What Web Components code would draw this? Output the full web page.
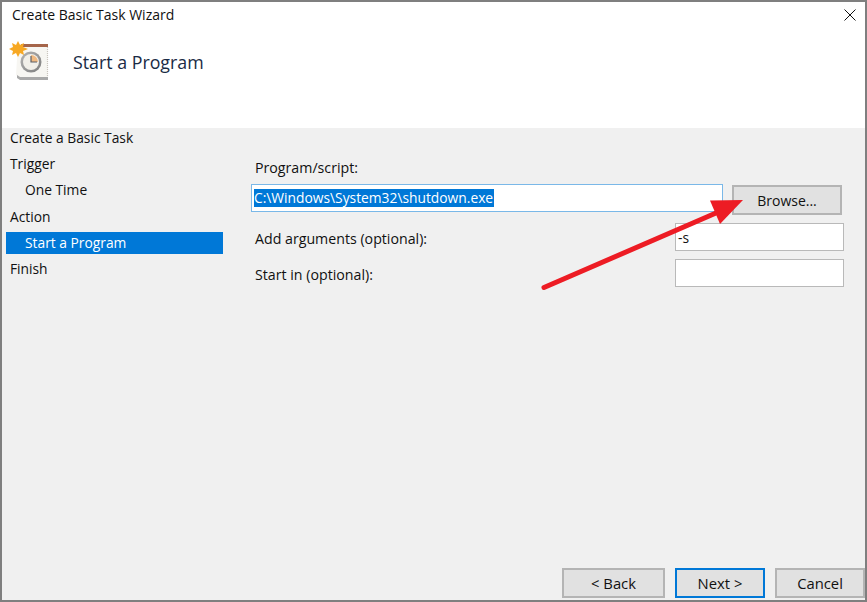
<!DOCTYPE html>
<html>
<head>
<meta charset="utf-8">
<title>Create Basic Task Wizard</title>
<style>
  html, body { margin: 0; height: 100%; }
  body { font: 14px "Open Sans", "Noto Sans", sans-serif; color: #111; overflow: hidden; }
</style>
</head>
<body>
<wizard-window>
  <wizard-header slot="header" heading="Start a Program"></wizard-header>
  <step-list slot="steps">
    <step-item>Create a Basic Task</step-item>
    <step-item>Trigger</step-item>
    <step-item sub>One Time</step-item>
    <step-item>Action</step-item>
    <step-item sub selected>Start a Program</step-item>
    <step-item>Finish</step-item>
  </step-list>
  <program-form slot="content"></program-form>
  <win-button slot="footer" style="width:103px">&lt; Back</win-button>
  <win-button slot="footer" primary style="width:90px">Next &gt;</win-button>
  <win-button slot="footer" style="width:90px">Cancel</win-button>
</wizard-window>

<script>
class WizardWindow extends HTMLElement {
  constructor() {
    super();
    this.attachShadow({ mode: 'open' });
    this.shadowRoot.innerHTML = `
      <style>
        :host { display: flex; flex-direction: column; box-sizing: border-box; width: 867px; height: 602px; border: 2px solid #7f7f7f; background: #f0f0f0; position: relative; }
        .title { box-sizing: border-box; height: 26px; background: #fff; display: flex; align-items: center; justify-content: space-between; padding: 0 9px 2px 10px; font-size: 14px; color: #111; }
        .title svg { display: block; margin-top: 2px; }
        .body { flex: 1; display: flex; min-height: 0; }
        .side { width: 221px; box-sizing: border-box; padding: 0 0 0 4px; flex: none; }
        .main { flex: 1; display: flex; flex-direction: column; }
        .content { flex: 1; }
        .footer { display: flex; justify-content: flex-end; gap: 10px; padding: 0 0 2px 0; }
        .arrow { position: absolute; left: 0; top: 0; pointer-events: none; }
      </style>
      <div class="title">
        <span>Create Basic Task Wizard</span>
        <svg width="12" height="12" viewBox="0 0 12 12"><path d="M.5.5l11 11M11.5.5l-11 11" stroke="#111" stroke-width="1" fill="none"/></svg>
      </div>
      <slot name="header"></slot>
      <div class="body">
        <div class="side"><slot name="steps"></slot></div>
        <div class="main">
          <div class="content"><slot name="content"></slot></div>
          <div class="footer"><slot name="footer"></slot></div>
        </div>
      </div>
      <svg class="arrow" width="863" height="598" viewBox="2 2 863 598">
        <path d="M544 287.5L716 213" stroke="#ed1c24" stroke-width="5" stroke-linecap="round" fill="none"/>
        <path d="M743 200L710 200.5L720 224Z" fill="#ed1c24"/>
      </svg>`;
  }
}
customElements.define('wizard-window', WizardWindow);

class WizardHeader extends HTMLElement {
  constructor() {
    super();
    this.attachShadow({ mode: 'open' });
    this.shadowRoot.innerHTML = `
      <style>
        :host { display: flex; align-items: flex-start; height: 100px; background: #fff; }
        svg { margin: 13px 0 0 7px; flex: none; }
        h1 { margin: 21px 0 0 24px; font-weight: 400; font-size: 17.8px; line-height: 26px; color: #1a2b45; }
      </style>
      <svg width="40" height="40" viewBox="0 0 40 40">
        <defs>
          <linearGradient id="ring" x1="0" y1="0" x2="1" y2="1">
            <stop offset="0" stop-color="#b5b5b5"/>
            <stop offset="1" stop-color="#7d7d7d"/>
          </linearGradient>
        </defs>
        <path d="M9 3H39V37H11L7 34Z" fill="#f7f6f2"/>
        <path d="M8 34L11 36H39V39H11L8 37Z" fill="#a9a9a9"/>
        <path d="M12 3H39V6H12Z" fill="#a5654a"/>
        <path d="M38.5 6V36" stroke="#c9c4bd" stroke-width="1.2" stroke-dasharray="1 1"/>
        <circle cx="22" cy="21" r="10.5" fill="url(#ring)"/>
        <circle cx="22" cy="21" r="8" fill="#f1efe9"/>
        <path d="M22 21V14A7 7 0 0 1 29 21Z" fill="#f0b981"/>
        <path d="M22 15V21H28" stroke="#5d6066" stroke-width="1.2" fill="none"/>
        <path d="M9 0L11 4 15 2 14 6 19 8 14 10 15 14 11 12 9 16 7 12 3 14 4 10 0 8 4 6 3 2 7 4Z" fill="#f7a823"/>
      </svg>
      <h1>${this.getAttribute('heading')}</h1>`;
  }
}
customElements.define('wizard-header', WizardHeader);

class StepList extends HTMLElement {
  constructor() {
    super();
    this.attachShadow({ mode: 'open' });
    this.shadowRoot.innerHTML = `
      <style>:host { display: flex; flex-direction: column; gap: 4.3px; margin-top: -1.2px; }</style>
      <slot></slot>`;
  }
}
customElements.define('step-list', StepList);

class StepItem extends HTMLElement {
  constructor() {
    super();
    this.attachShadow({ mode: 'open' });
    this.shadowRoot.innerHTML = `
      <style>
        :host { display: block; height: 22px; line-height: 21px; padding-left: 4px; font-size: 13.8px; color: #111; }
        :host([sub]) { padding-left: 19px; }
        :host([selected]) { background: #0078d7; color: #fff; }
      </style>
      <slot></slot>`;
  }
}
customElements.define('step-item', StepItem);

class WinButton extends HTMLElement {
  constructor() {
    super();
    this.attachShadow({ mode: 'open' });
    this.shadowRoot.innerHTML = `
      <style>
        :host { display: flex; align-items: center; justify-content: center; box-sizing: border-box; height: 30px; border: 2px solid #b4b4b4; background: #e1e1e1; font-size: 14.8px; color: #111; }
        :host([primary]) { border-color: #0078d7; }
      </style>
      <slot></slot>`;
  }
}
customElements.define('win-button', WinButton);

class WinInput extends HTMLElement {
  constructor() {
    super();
    this.attachShadow({ mode: 'open' });
    this.shadowRoot.innerHTML = `
      <style>
        :host { display: flex; align-items: center; box-sizing: border-box; height: 28px; padding: 0 2px; border: 1px solid #b9b9b9; background: #fff; font-size: 13.8px; color: #111; }
        :host([focused]) { border-color: #7ab8e8; }
        ::slotted(mark) { background: #0078d7; color: #fff; line-height: 18px; padding-right: 1px; }
      </style>
      <slot></slot>`;
  }
}
customElements.define('win-input', WinInput);

class ProgramForm extends HTMLElement {
  constructor() {
    super();
    this.attachShadow({ mode: 'open' });
    this.shadowRoot.innerHTML = `
      <style>
        :host { display: flex; flex-direction: column; padding: 30px 21px 0 28px; font-size: 14.2px; color: #111; }
        .label { height: 20px; line-height: 20px; margin-left: 4px; }
        .top { display: flex; gap: 9px; margin-top: 6px; align-items: flex-start; }
        .top win-input { flex: 1; }
        .top win-button { width: 110px; margin: 1px 2px 0 0; flex: none; font-size: 14px; }
        .row { display: flex; justify-content: space-between; align-items: flex-start; }
        .row .label { margin-top: 6px; }
        .row win-input { width: 169px; }
        .args { margin-top: 8px; }
        .start { margin-top: 8px; }
      </style>
      <div class="label">Program/script:</div>
      <div class="top">
        <win-input focused><mark>C:\\Windows\\System32\\shutdown.exe</mark></win-input>
        <win-button>Browse...</win-button>
      </div>
      <div class="row args"><span class="label">Add arguments (optional):</span><win-input>-s</win-input></div>
      <div class="row start"><span class="label">Start in (optional):</span><win-input></win-input></div>`;
  }
}
customElements.define('program-form', ProgramForm);
</script>
</body>
</html>
